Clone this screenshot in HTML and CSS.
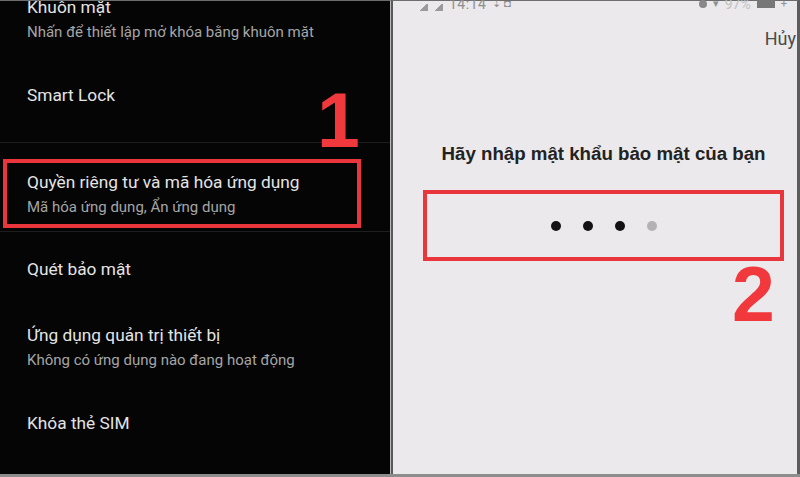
FILE: index.html
```html
<!DOCTYPE html>
<html lang="vi">
<head>
  <meta charset="UTF-8" />
  <title>Mã hóa ứng dụng</title>
  <link rel="stylesheet" href="styles.css">
</head>
<body>

  <div class="frame">

    <!-- left: settings list (dark) -->
    <div class="settings">
      <div class="list">
        <div class="row first">
          <div class="title">Khuôn mặt</div>
          <div class="sub">Nhấn để thiết lập mở khóa bằng khuôn mặt</div>
        </div>
        <div class="row smart">
          <div class="title">Smart Lock</div>
        </div>
        <div class="divider"></div>
        <div class="row boxed">
          <div class="title">Quyền riêng tư và mã hóa ứng dụng</div>
          <div class="sub">Mã hóa ứng dụng, Ẩn ứng dụng</div>
        </div>
        <div class="divider after-box"></div>
        <div class="row scan">
          <div class="title">Quét bảo mật</div>
        </div>
        <div class="row admin">
          <div class="title">Ứng dụng quản trị thiết bị</div>
          <div class="sub">Không có ứng dụng nào đang hoạt động</div>
        </div>
        <div class="row sim">
          <div class="title">Khóa thẻ SIM</div>
        </div>
      </div>
      <span class="step step-1">1</span>
    </div>

    <!-- right: password prompt (light) -->
    <div class="prompt">
      <div class="statusbar">
        <div class="sb-left">
          <span class="sig"></span><span class="sig"></span>
          <span class="clock">14:14</span>
          <span class="mini">⇣ ◘</span>
        </div>
        <div class="sb-right">
          <span class="dot-ic"></span>
          <span class="mini">▾</span>
          <span class="pct">97%</span>
          <span class="batt"></span>
          <span class="mini">+</span>
        </div>
      </div>
      <div class="cancel">Hủy</div>
      <div class="ask">
        <h3>Hãy nhập mật khẩu bảo mật của bạn</h3>
        <div class="pin-box">
          <span class="pin on"></span>
          <span class="pin on"></span>
          <span class="pin on"></span>
          <span class="pin"></span>
        </div>
      </div>
      <span class="step step-2">2</span>
    </div>

  </div>

</body>
</html>
```

FILE: styles.css
```css
html, body { margin: 0; padding: 0; }
body {
  font-family: Roboto, "Noto Sans", Arial, sans-serif;
  background: #fff;
  width: 800px;
  height: 477px;
  overflow: hidden;
}

.frame {
  display: flex;
  height: 474px;
  border-bottom: 3px solid #8d8d8d;
  overflow: hidden;
}

/* ---------- left panel ---------- */
.settings {
  position: relative;
  width: 390px;
  background: #050505;
  border-top: 1px solid #6d6d6d;
  border-right: 1px solid #b9b9b9;
  overflow: hidden;
}

.list { margin-top: -6px; }

.row { padding-left: 27px; }
.title {
  color: #e4e4e4;
  font-size: 17.3px;
  line-height: 25px;
}
.sub {
  color: #a6a6a6;
  font-size: 15px;
  line-height: 24px;
}

.smart { padding-top: 39px; padding-bottom: 34px; }

.divider {
  height: 1px;
  background: #1e1e1e;
  margin-bottom: 16px;
}
.divider.after-box { margin-top: 3px; margin-bottom: 0; }

.boxed {
  width: 330px;
  margin-left: 3px;
  padding: 7px 0 5px 20px;
  border: 4px solid #e9363c;
}

.scan { padding-top: 25px; }
.admin { padding-top: 41px; }
.sim { padding-top: 39px; }

.step {
  position: absolute;
  color: #f0383d;
  font-family: "Liberation Sans", Arial, sans-serif;
  font-weight: bold;
  font-size: 77px;
  line-height: 1;
}
.step-1 { left: 317px; top: 81px; }
.step-2 { left: 339px; top: 255px; }

/* ---------- right panel ---------- */
.prompt {
  position: relative;
  flex: 1;
  background: #ebe9eb;
  border-left: 2px solid #5a5a5a;
  border-right: 3px solid #5c5c5c;
  border-top: 1px solid #6d6d6d;
}

.statusbar {
  display: flex;
  justify-content: space-between;
  margin-top: -6px;
  padding: 0 10px 0 26px;
  color: #8e8e8e;
  font-size: 14px;
  line-height: 18px;
}
.sb-left, .sb-right {
  display: flex;
  align-items: center;
  gap: 6px;
}
.sig {
  width: 9px;
  height: 7px;
  margin-top: 6px;
  background: linear-gradient(135deg, transparent 50%, #9a9a9a 50%);
}
.clock { letter-spacing: 0.5px; }
.mini { font-size: 11px; }
.dot-ic {
  width: 8px;
  height: 8px;
  border-radius: 50%;
  background: #888;
}
.pct { color: #c2c2c2; }
.batt {
  width: 18px;
  height: 8px;
  background: #777;
}

.cancel {
  text-align: right;
  color: #4a4a4a;
  font-size: 18px;
  line-height: 24px;
  margin-top: 14px;
  padding-right: 1px;
}

.ask {
  width: 361px;
  margin: 92px 0 0 30px;
}
.ask h3 {
  margin: 0;
  text-align: center;
  color: #222;
  font-family: "Liberation Sans", Arial, sans-serif;
  font-size: 18.7px;
  font-weight: bold;
  line-height: 22px;
}

.pin-box {
  display: flex;
  justify-content: center;
  align-items: center;
  gap: 22px;
  height: 63px;
  margin-top: 25px;
  border: 4px solid #e9363c;
}
.pin {
  width: 10px;
  height: 10px;
  border-radius: 50%;
  background: #b3b1b3;
}
.pin.on { background: #121212; }
```
